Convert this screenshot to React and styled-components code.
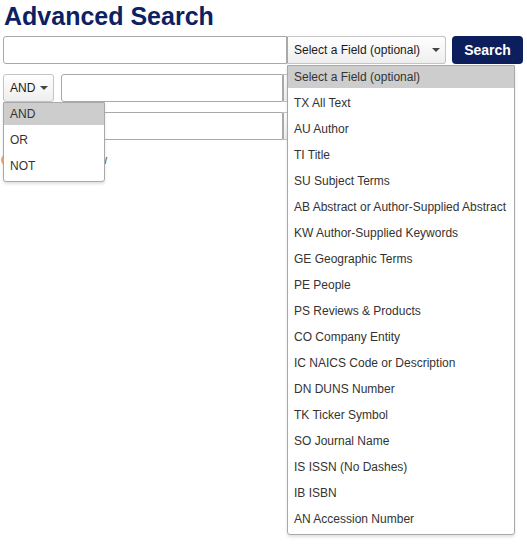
import React from 'react'
import styled, { createGlobalStyle } from 'styled-components'

const GlobalStyle = createGlobalStyle`
  html, body {
    margin: 0;
    padding: 0;
    background: #fff;
    font-family: "Liberation Sans", Arial, sans-serif;
    font-size: 12px;
    color: #333;
  }
  * { box-sizing: border-box; }
`

const fields = [
  'Select a Field (optional)',
  'TX All Text',
  'AU Author',
  'TI Title',
  'SU Subject Terms',
  'AB Abstract or Author-Supplied Abstract',
  'KW Author-Supplied Keywords',
  'GE Geographic Terms',
  'PE People',
  'PS Reviews & Products',
  'CO Company Entity',
  'IC NAICS Code or Description',
  'DN DUNS Number',
  'TK Ticker Symbol',
  'SO Journal Name',
  'IS ISSN (No Dashes)',
  'IB ISBN',
  'AN Accession Number'
]

const Page = styled.div`
  padding: 0 4px 0 3px;
  width: 527px;
  min-height: 545px;
`

const Title = styled.h1`
  margin: 1px 0 5px 1px;
  font-size: 25px;
  line-height: 30px;
  font-weight: 700;
  color: #0c2163;
`

const Row = styled.div`
  display: flex;
  align-items: stretch;
  height: 28px;
  margin-bottom: 10px;
`

const Input = styled.div`
  flex: ${p => p.$fixed ? `0 0 ${p.$fixed}px` : '1 1 auto'};
  margin-left: ${p => p.$offset || 0}px;
  border: 1px solid #a9a9a9;
  border-radius: 3px 0 0 3px;
  background: #fff;
`

const Drop = styled.div`
  position: relative;
  flex: 0 0 ${p => p.$width}px;
`

const DropButton = styled.div`
  height: 100%;
  display: flex;
  align-items: center;
  justify-content: space-between;
  padding: 0 5px 0 6px;
  border: 1px solid #c4c4c4;
  border-left-color: ${p => p.$joined ? '#a9a9a9' : '#c4c4c4'};
  border-radius: ${p => p.$joined ? '0 3px 3px 0' : '3px'};
  background: linear-gradient(#ffffff, #eeeeee);
  color: #1a1a1a;
  font-size: 12px;
  white-space: nowrap;
`

const Caret = styled.span`
  width: 0;
  height: 0;
  margin-left: 5px;
  border-left: 4px solid transparent;
  border-right: 4px solid transparent;
  border-top: 4px solid #444;
`

const SearchButton = styled.div`
  flex: 0 0 71px;
  margin-left: 6px;
  display: flex;
  align-items: center;
  justify-content: center;
  border-radius: 4px;
  background: #0c1f5c;
  color: #fff;
  font-size: 14px;
  font-weight: 700;
`

const Menu = styled.ul`
  position: absolute;
  z-index: 10;
  left: 0;
  top: calc(100% + ${p => p.$gap || 0}px);
  width: ${p => p.$width}px;
  margin: 0;
  padding: 0 0 4px;
  list-style: none;
  background: #fff;
  border: 1px solid #a9a9a9;
  border-radius: 0 0 3px 3px;
  box-shadow: 0 2px 3px rgba(0, 0, 0, 0.12);
`

const Item = styled.li`
  height: 22px;
  line-height: 22px;
  margin-bottom: 4px;
  padding-left: 6px;
  white-space: nowrap;
  font-size: 12px;
  color: #333;
  background: ${p => p.$active ? '#cdcdcd' : 'transparent'};
  &:last-child { margin-bottom: 0; }
`

const AddRow = styled.div`
  display: flex;
  align-items: center;
  margin-top: 12px;
  height: 16px;
  color: #555;
  font-size: 12px;
`

const AddIcon = styled.span`
  width: 12px;
  height: 12px;
  margin: 0 6px 0 -2px;
  border-radius: 50%;
  background: #f0a878;
`

export default function App() {
  return (
    <Page>
      <GlobalStyle />
      <Title>Advanced Search</Title>
      <Row>
        <Input />
        <Drop $width={159}>
          <DropButton $joined>
            Select a Field (optional)
            <Caret />
          </DropButton>
          <Menu $width={228} $gap={1}>
            {fields.map((f, i) => (
              <Item key={f} $active={i === 0}>{f}</Item>
            ))}
          </Menu>
        </Drop>
        <SearchButton>Search</SearchButton>
      </Row>
      <Row>
        <Drop $width={51}>
          <DropButton>
            AND
            <Caret />
          </DropButton>
          <Menu $width={102}>
            <Item $active>AND</Item>
            <Item>OR</Item>
            <Item>NOT</Item>
          </Menu>
        </Drop>
        <Input $fixed={222} $offset={7} />
        <Drop $width={159}>
          <DropButton $joined>
            Select a Field (optional)
            <Caret />
          </DropButton>
        </Drop>
      </Row>
      <Row>
        <Drop $width={51}>
          <DropButton>
            AND
            <Caret />
          </DropButton>
        </Drop>
        <Input $fixed={222} $offset={7} />
        <Drop $width={159}>
          <DropButton $joined>
            Select a Field (optional)
            <Caret />
          </DropButton>
        </Drop>
      </Row>
      <AddRow>
        <AddIcon />
        Add another row
      </AddRow>
    </Page>
  )
}
